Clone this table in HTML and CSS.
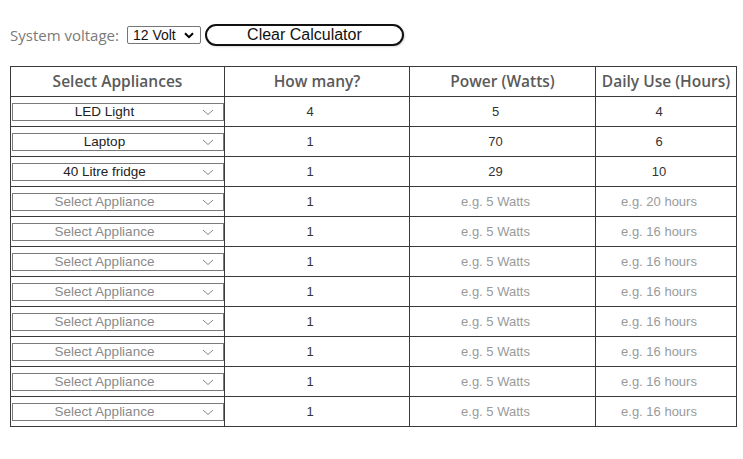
FILE: index.html
```html
<!DOCTYPE html>
<html>
<head>
<meta charset="utf-8">
<link rel="stylesheet" href="styles.css">
</head>
<body>
<div class="page">
  <div class="toolbar">
    <span class="label">System voltage:</span>
    <div class="volt"><span>12 Volt</span><svg class="volt-arrow" width="10" height="7" viewBox="0 0 10 7"><path d="M1 1.2 L5 5.2 L9 1.2" fill="none" stroke="#000" stroke-width="2"/></svg></div>
    <button class="clear">Clear Calculator</button>
  </div>
  <table class="calc">
    <colgroup><col class="c1"><col class="c2"><col class="c3"><col class="c4"></colgroup>
    <thead>
      <tr><th>Select Appliances</th><th>How many?</th><th>Power (Watts)</th><th>Daily Use (Hours)</th></tr>
    </thead>
    <tbody>
      <tr><td class="sel"><div class="pick"><span class="pick-text">LED Light</span><svg class="chev" width="12" height="7" viewBox="0 0 12 7"><path d="M1 1 L6 5.5 L11 1" fill="none" stroke="#888" stroke-width="1"/></svg></div></td><td class="num">4</td><td class="num">5</td><td class="num">4</td></tr>
      <tr><td class="sel"><div class="pick"><span class="pick-text">Laptop</span><svg class="chev" width="12" height="7" viewBox="0 0 12 7"><path d="M1 1 L6 5.5 L11 1" fill="none" stroke="#888" stroke-width="1"/></svg></div></td><td class="num">1</td><td class="num">70</td><td class="num">6</td></tr>
      <tr><td class="sel"><div class="pick"><span class="pick-text">40 Litre fridge</span><svg class="chev" width="12" height="7" viewBox="0 0 12 7"><path d="M1 1 L6 5.5 L11 1" fill="none" stroke="#888" stroke-width="1"/></svg></div></td><td class="num">1</td><td class="num">29</td><td class="num">10</td></tr>
      <tr><td class="sel"><div class="pick empty"><span class="pick-text">Select Appliance</span><svg class="chev" width="12" height="7" viewBox="0 0 12 7"><path d="M1 1 L6 5.5 L11 1" fill="none" stroke="#888" stroke-width="1"/></svg></div></td><td class="num">1</td><td class="num ph">e.g. 5 Watts</td><td class="num ph">e.g. 20 hours</td></tr>
      <tr><td class="sel"><div class="pick empty"><span class="pick-text">Select Appliance</span><svg class="chev" width="12" height="7" viewBox="0 0 12 7"><path d="M1 1 L6 5.5 L11 1" fill="none" stroke="#888" stroke-width="1"/></svg></div></td><td class="num">1</td><td class="num ph">e.g. 5 Watts</td><td class="num ph">e.g. 16 hours</td></tr>
      <tr><td class="sel"><div class="pick empty"><span class="pick-text">Select Appliance</span><svg class="chev" width="12" height="7" viewBox="0 0 12 7"><path d="M1 1 L6 5.5 L11 1" fill="none" stroke="#888" stroke-width="1"/></svg></div></td><td class="num">1</td><td class="num ph">e.g. 5 Watts</td><td class="num ph">e.g. 16 hours</td></tr>
      <tr><td class="sel"><div class="pick empty"><span class="pick-text">Select Appliance</span><svg class="chev" width="12" height="7" viewBox="0 0 12 7"><path d="M1 1 L6 5.5 L11 1" fill="none" stroke="#888" stroke-width="1"/></svg></div></td><td class="num">1</td><td class="num ph">e.g. 5 Watts</td><td class="num ph">e.g. 16 hours</td></tr>
      <tr><td class="sel"><div class="pick empty"><span class="pick-text">Select Appliance</span><svg class="chev" width="12" height="7" viewBox="0 0 12 7"><path d="M1 1 L6 5.5 L11 1" fill="none" stroke="#888" stroke-width="1"/></svg></div></td><td class="num">1</td><td class="num ph">e.g. 5 Watts</td><td class="num ph">e.g. 16 hours</td></tr>
      <tr><td class="sel"><div class="pick empty"><span class="pick-text">Select Appliance</span><svg class="chev" width="12" height="7" viewBox="0 0 12 7"><path d="M1 1 L6 5.5 L11 1" fill="none" stroke="#888" stroke-width="1"/></svg></div></td><td class="num">1</td><td class="num ph">e.g. 5 Watts</td><td class="num ph">e.g. 16 hours</td></tr>
      <tr><td class="sel"><div class="pick empty"><span class="pick-text">Select Appliance</span><svg class="chev" width="12" height="7" viewBox="0 0 12 7"><path d="M1 1 L6 5.5 L11 1" fill="none" stroke="#888" stroke-width="1"/></svg></div></td><td class="num">1</td><td class="num ph">e.g. 5 Watts</td><td class="num ph">e.g. 16 hours</td></tr>
      <tr><td class="sel"><div class="pick empty"><span class="pick-text">Select Appliance</span><svg class="chev" width="12" height="7" viewBox="0 0 12 7"><path d="M1 1 L6 5.5 L11 1" fill="none" stroke="#888" stroke-width="1"/></svg></div></td><td class="num">1</td><td class="num ph">e.g. 5 Watts</td><td class="num ph">e.g. 16 hours</td></tr>
    </tbody>
  </table>
</div>
</body>
</html>
```
FILE: styles.css
```css
html, body {
  margin: 0;
  padding: 0;
  background: #fff;
}
.page {
  padding: 24px 7px 0 10px;
}
.toolbar {
  display: flex;
  align-items: center;
  height: 22px;
}
.label {
  font-family: "Open Sans", sans-serif;
  font-size: 15px;
  color: #7a7a7a;
  margin-right: 8px;
}
.volt {
  box-sizing: border-box;
  width: 74px;
  height: 18px;
  border: 1px solid #767676;
  border-radius: 2px;
  display: flex;
  align-items: center;
  justify-content: space-between;
  padding: 0 6px 0 5px;
  font-family: "Liberation Sans", Arial, sans-serif;
  font-size: 14px;
  color: #111;
}
.volt-arrow {
  display: block;
}
.clear {
  box-sizing: border-box;
  margin-left: 4px;
  width: 199px;
  height: 22px;
  border: 2px solid #111;
  border-radius: 11px;
  background: #fff;
  font-family: "Liberation Sans", Arial, sans-serif;
  font-size: 16px;
  color: #111;
  padding: 0;
  box-shadow: 1px 1px 2px rgba(0,0,0,0.15);
}
.calc {
  margin-top: 20px;
  width: 726px;
  border-collapse: collapse;
  border: 1px solid #333;
  table-layout: fixed;
}
.c1 { width: 214px; }
.c2 { width: 185px; }
.c3 { width: 186px; }
.c4 { width: 141px; }
.calc th, .calc td {
  border: 1px solid #3a3a3a;
  padding: 0;
  height: 29px;
  text-align: center;
}
.calc th {
  font-family: "Open Sans", sans-serif;
  font-weight: 600;
  font-size: 15.5px;
  color: #5a5a5a;
  padding-bottom: 1px;
  height: 28px;
}
.calc td.num {
  font-family: "Liberation Sans", Arial, sans-serif;
  font-size: 13px;
  color: #333;
  padding-right: 14px;
}
.calc td.ph {
  color: #9a9a9a;
}
.calc td.sel {
  vertical-align: top;
}
.pick {
  box-sizing: border-box;
  height: 18px;
  margin: 6px 0 5px 1px;
  border: 1px solid #7a7a7a;
  display: flex;
  align-items: center;
  font-family: "Liberation Sans", Arial, sans-serif;
  font-size: 13.5px;
  color: #222;
}
.pick-text {
  flex: 1;
  text-align: center;
  padding-right: 6px;
  margin-top: -2px;
}
.pick.empty .pick-text {
  color: #8a8a8a;
}
.chev {
  display: block;
  margin: 0 9px 0 0;
}
```
